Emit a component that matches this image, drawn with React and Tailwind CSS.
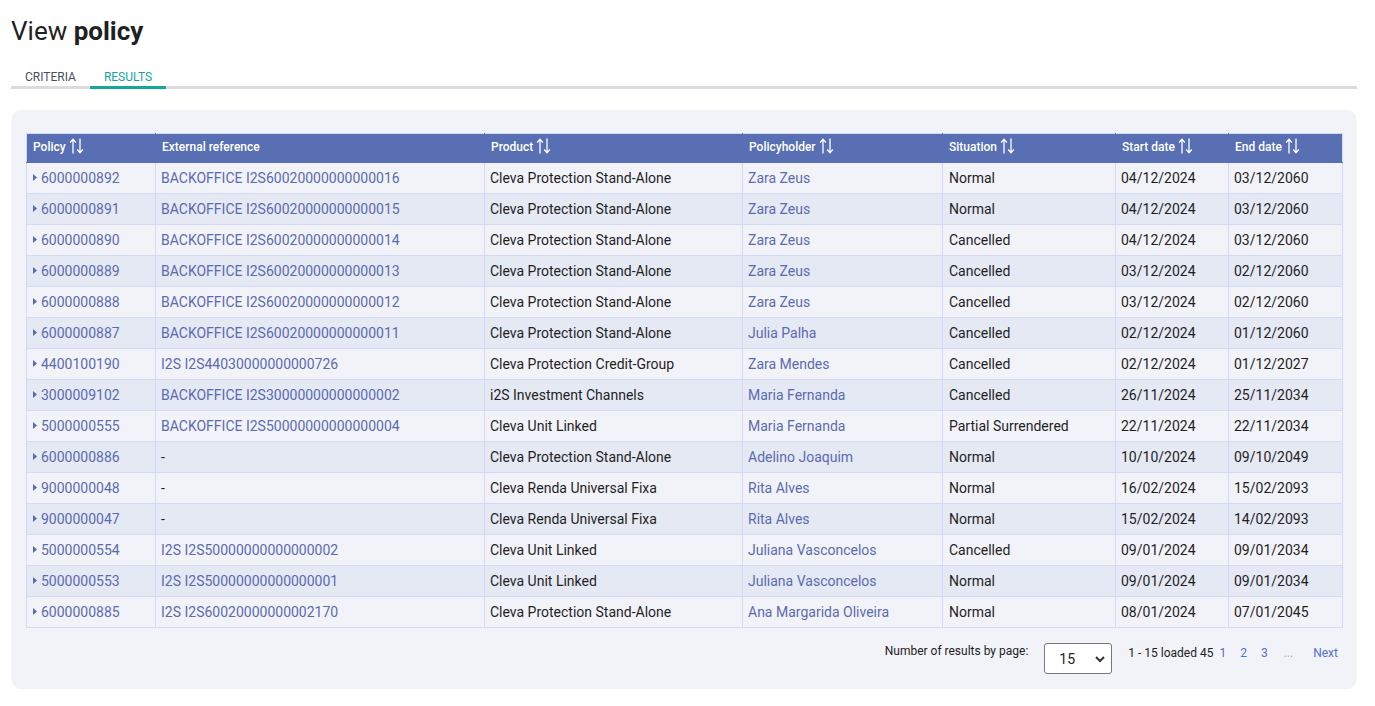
import React from "react";

const rows = [
    ["6000000892", "BACKOFFICE I2S60020000000000016", "Cleva Protection Stand-Alone", "Zara Zeus", "Normal", "04/12/2024", "03/12/2060"],
    ["6000000891", "BACKOFFICE I2S60020000000000015", "Cleva Protection Stand-Alone", "Zara Zeus", "Normal", "04/12/2024", "03/12/2060"],
    ["6000000890", "BACKOFFICE I2S60020000000000014", "Cleva Protection Stand-Alone", "Zara Zeus", "Cancelled", "04/12/2024", "03/12/2060"],
    ["6000000889", "BACKOFFICE I2S60020000000000013", "Cleva Protection Stand-Alone", "Zara Zeus", "Cancelled", "03/12/2024", "02/12/2060"],
    ["6000000888", "BACKOFFICE I2S60020000000000012", "Cleva Protection Stand-Alone", "Zara Zeus", "Cancelled", "03/12/2024", "02/12/2060"],
    ["6000000887", "BACKOFFICE I2S60020000000000011", "Cleva Protection Stand-Alone", "Julia Palha", "Cancelled", "02/12/2024", "01/12/2060"],
    ["4400100190", "I2S I2S44030000000000726", "Cleva Protection Credit-Group", "Zara Mendes", "Cancelled", "02/12/2024", "01/12/2027"],
    ["3000009102", "BACKOFFICE I2S30000000000000002", "i2S Investment Channels", "Maria Fernanda", "Cancelled", "26/11/2024", "25/11/2034"],
    ["5000000555", "BACKOFFICE I2S50000000000000004", "Cleva Unit Linked", "Maria Fernanda", "Partial Surrendered", "22/11/2024", "22/11/2034"],
    ["6000000886", "-", "Cleva Protection Stand-Alone", "Adelino Joaquim", "Normal", "10/10/2024", "09/10/2049"],
    ["9000000048", "-", "Cleva Renda Universal Fixa", "Rita Alves", "Normal", "16/02/2024", "15/02/2093"],
    ["9000000047", "-", "Cleva Renda Universal Fixa", "Rita Alves", "Normal", "15/02/2024", "14/02/2093"],
    ["5000000554", "I2S I2S50000000000000002", "Cleva Unit Linked", "Juliana Vasconcelos", "Cancelled", "09/01/2024", "09/01/2034"],
    ["5000000553", "I2S I2S50000000000000001", "Cleva Unit Linked", "Juliana Vasconcelos", "Normal", "09/01/2024", "09/01/2034"],
    ["6000000885", "I2S I2S60020000000002170", "Cleva Protection Stand-Alone", "Ana Margarida Oliveira", "Normal", "08/01/2024", "07/01/2045"],
];

const columns = [
    { label: "Policy", sort: true, w: "w-[129px]" },
    { label: "External reference", sort: false, w: "w-[329px]" },
    { label: "Product", sort: true, w: "w-[258px]" },
    { label: "Policyholder", sort: true, w: "w-[200px]" },
    { label: "Situation", sort: true, w: "w-[173px]" },
    { label: "Start date", sort: true, w: "w-[113px]" },
    { label: "End date", sort: true, w: "w-[114px]" },
];

const SortIcon = () => (
    <svg width="15" height="16" viewBox="0 0 15 16" className="inline-block ml-[3px] -mt-[3px]" fill="none" stroke="white" strokeWidth="1.3">
        <path d="M4 15.5V1.5M1.2 4.5L4 1.2l2.8 3.3" />
        <path d="M11 0.5v14M8.2 11.5l2.8 3.3 2.8-3.3" />
    </svg>
);

const Caret = () => (
    <svg width="4" height="7" viewBox="0 0 4 7" className="inline-block mr-[4px] mb-[2px]">
        <path d="M0 0L4 3.5L0 7Z" fill="#5b6bb0" />
    </svg>
);

const App = () => {
    return (
        <div className="font-['Roboto',sans-serif] bg-white min-h-[706px] pl-[11px] pr-[18px] pt-[14px] text-[#222]">
            <h1 className="text-[26px] leading-[34px] text-[#1f1f24]">
                View <span className="font-bold">policy</span>
            </h1>

            <div className="mt-[22px] flex border-b-[3px] border-[#dcdcdc]">
                <div className="w-[79px] pl-[14px] text-[12px] leading-[15px] pb-[1px] text-[#4a4f5e]">CRITERIA</div>
                <div className="w-[76px] text-center text-[12px] leading-[15px] pb-[1px] text-[#16a596] border-b-[3px] border-[#14a898] -mb-[3px]">
                    RESULTS
                </div>
            </div>

            <div className="mt-[21px] bg-[#f2f3f9] rounded-[10px] px-[15px] pt-[23px] pb-[15px]">
                <table className="w-full border-collapse table-fixed text-[14px]">
                    <thead>
                        <tr className="bg-[#5870b3] h-[29px]">
                            {columns.map((c) => (
                                <th
                                    key={c.label}
                                    className={`${c.w} text-left font-medium text-[12px] text-white px-[6px] pb-[2px] border border-[#5870b3] border-t-[#d3daf6] first:border-l-[#d3daf6] last:border-r-[#d3daf6]`}
                                >
                                    {c.label}
                                    {c.sort && <SortIcon />}
                                </th>
                            ))}
                        </tr>
                    </thead>
                    <tbody>
                        {rows.map((r, i) => (
                            <tr key={r[0]} className={`h-[31px] ${i % 2 === 0 ? "bg-[#f2f3f9]" : "bg-[#e5e9f4]"}`}>
                                <td className="border border-[#d3daf6] pl-[6px] text-[#5b6bb0]">
                                    <Caret />
                                    {r[0]}
                                </td>
                                <td className={`border border-[#d3daf6] px-[5px] ${r[1] === "-" ? "text-[#222]" : "text-[#5b6bb0]"}`}>{r[1]}</td>
                                <td className="border border-[#d3daf6] px-[5px] text-[#1f1f1f]">{r[2]}</td>
                                <td className="border border-[#d3daf6] px-[5px] text-[#5b6bb0]">{r[3]}</td>
                                <td className="border border-[#d3daf6] px-[6px] text-[#1f1f1f]">{r[4]}</td>
                                <td className="border border-[#d3daf6] px-[5px] text-[#1f1f1f]">{r[5]}</td>
                                <td className="border border-[#d3daf6] px-[5px] text-[#1f1f1f]">{r[6]}</td>
                            </tr>
                        ))}
                    </tbody>
                </table>

                <div className="flex justify-end items-center mt-[14px] pr-[4px] text-[12px]">
                    <span className="text-[#222] mb-[14px]">Number of results by page:</span>
                    <div className="ml-[16px] relative w-[68px] h-[31px] border border-[#767676] rounded-[3px] bg-white flex items-center">
                        <span className="pl-[14px] text-[14px] text-[#222] mt-[2px]">15</span>
                        <svg width="10" height="7" viewBox="0 0 10 7" className="absolute right-[6px] top-[12px]">
                            <path d="M1 1l4 4 4-4" stroke="#333" strokeWidth="2" fill="none" />
                        </svg>
                    </div>
                    <div className="flex items-center mb-[10px]">
                        <span className="ml-[16px] text-[#222]">1 - 15 loaded 45</span>
                        <span className="ml-[6px] text-[#5b6bb0]">1</span>
                        <span className="ml-[14px] text-[#4e6fd6]">2</span>
                        <span className="ml-[14px] text-[#4e6fd6]">3</span>
                        <span className="ml-[16px] text-[#9aa6d6]">...</span>
                        <span className="ml-[20px] text-[#4e6fd6]">Next</span>
                    </div>
                </div>
            </div>
        </div>
    );
};

export default App;
